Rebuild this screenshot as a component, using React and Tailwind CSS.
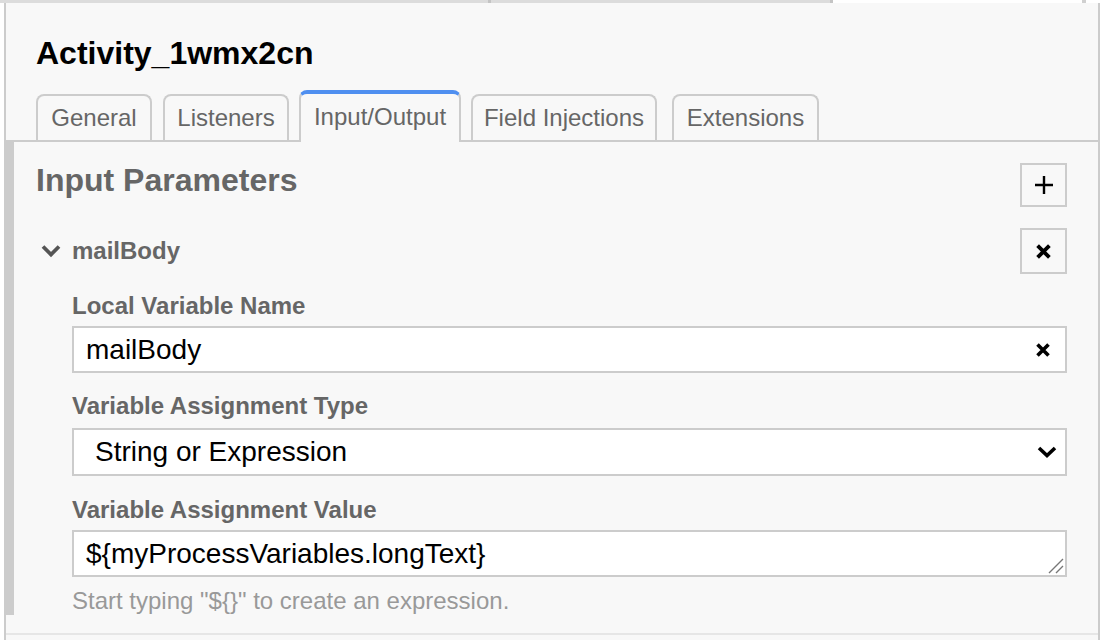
import React from "react";

const font = "font-['Liberation_Sans',Arial,Helvetica,sans-serif]";

function Tab({ label, active, className = "" }) {
  if (active) {
    return (
      <div
        className={`relative z-10 -mb-[2px] flex h-[52px] items-center justify-center rounded-t-[8px] border-x-2 border-t-4 border-x-[#ccc] border-t-[#4f8ff0] bg-[#f8f8f8] pb-[2px] text-[24px] text-[#666] ${className}`}
      >
        {label}
      </div>
    );
  }
  return (
    <div
      className={`flex h-[46px] items-center justify-center rounded-t-[8px] border-x-2 border-t-2 border-[#ccc] bg-[#f8f8f8] text-[24px] text-[#666] ${className}`}
    >
      {label}
    </div>
  );
}

function XIcon({ size = 15, stroke = 3.6 }) {
  return (
    <svg width={size} height={size} viewBox="0 0 14 14">
      <path d="M1.5 1.5 L12.5 12.5 M12.5 1.5 L1.5 12.5" stroke="#000" strokeWidth={stroke} strokeLinecap="butt" fill="none" />
    </svg>
  );
}

function Label({ children, className = "" }) {
  return (
    <div className={`text-[24px] font-bold leading-[30px] text-[#666] ${className}`}>{children}</div>
  );
}

export default function App() {
  return (
    <div className={`relative h-[640px] w-[1110px] overflow-hidden bg-white ${font}`}>
      {/* top strip */}
      <div className="flex h-[3px]">
        <div className="w-[488px] bg-[#dcdcdc]" />
        <div className="w-[3px] bg-[#c4c4c4]" />
        <div className="w-[339px] bg-[#dcdcdc]" />
        <div className="w-[3px] bg-[#c4c4c4]" />
        <div className="w-[249px] bg-white" />
        <div className="w-[4px] bg-[#d0d0d0]" />
      </div>

      {/* panel */}
      <div className="ml-[4px] flex h-[637px] w-[1096px] flex-col border-x-2 border-[#ccc] bg-[#f8f8f8]">
        <h1 className="pl-[30px] pt-[30px] text-[32px] font-bold leading-[40px] text-black">
          Activity_1wmx2cn
        </h1>

        {/* tabs */}
        <div className="mt-[17px] flex h-[52px] items-end border-b-2 border-[#ccc] pl-[30px]">
          <Tab label="General" className="w-[116px]" />
          <Tab label="Listeners" className="ml-[11px] w-[126px]" />
          <Tab label="Input/Output" active className="ml-[10px] w-[162px]" />
          <Tab label="Field Injections" className="ml-[10px] w-[186px]" />
          <Tab label="Extensions" className="ml-[15px] w-[147px]" />
        </div>

        {/* group */}
        <div className="border-b-2 border-[#e6e6e6] pb-[18px]">
          <div className="border-l-[8px] border-[#ccc] pl-[22px] pr-[31px]">
            <div className="flex items-start justify-between pt-[18px]">
              <h2 className="text-[32px] font-bold leading-[40px] text-[#666]">Input Parameters</h2>
              <div className="mt-[3px] flex h-[44px] w-[47px] items-center justify-center border-2 border-[#ccc]">
                <svg width="20" height="20" viewBox="0 0 20 20">
                  <path d="M10 1 V19 M1 10 H19" stroke="#000" strokeWidth="2.4" fill="none" />
                </svg>
              </div>
            </div>

            <div className="mt-[21px] flex items-center justify-between">
              <div className="flex items-center">
                <svg width="20" height="14" viewBox="0 0 20 14" className="ml-[5px]">
                  <path d="M2 2.5 L10 10.5 L18 2.5" stroke="#555" strokeWidth="3.8" fill="none" />
                </svg>
                <span className="ml-[11px] text-[24px] font-bold leading-[30px] text-[#666]">mailBody</span>
              </div>
              <div className="flex h-[46px] w-[47px] items-center justify-center border-2 border-[#ccc]">
                <XIcon />
              </div>
            </div>

            <div className="pl-[36px]">
              <Label className="mt-[17px]">Local Variable Name</Label>
              <div className="mt-[5px] flex h-[47px] items-center justify-between border-2 border-[#ccc] bg-white pl-[12px] pr-[15px]">
                <span className="text-[28px] leading-[32px] text-black">mailBody</span>
                <XIcon size={14} stroke={3.6} />
              </div>

              <Label className="mt-[18px]">Variable Assignment Type</Label>
              <div className="mt-[7px] flex h-[48px] items-center justify-between border-2 border-[#ccc] bg-white pl-[21px] pr-[8px]">
                <span className="text-[28px] leading-[32px] text-black">String or Expression</span>
                <svg width="20" height="14" viewBox="0 0 20 14">
                  <path d="M2 3 L10 10.5 L18 3" stroke="#000" strokeWidth="3.6" fill="none" />
                </svg>
              </div>

              <Label className="mt-[19px]">Variable Assignment Value</Label>
              <div className="relative mt-[5px] flex h-[47px] items-center border-2 border-[#ccc] bg-white pl-[12px]">
                <span className="text-[28px] leading-[32px] text-black">{"${myProcessVariables.longText}"}</span>
                <svg width="16" height="16" viewBox="0 0 16 16" className="absolute bottom-[1px] right-[1px]">
                  <path d="M1 15 L15 1 M8 15 L15 8" stroke="#777" strokeWidth="1.4" fill="none" />
                </svg>
              </div>

              <div className="mt-[10px] text-[24px] leading-[28px] text-[#999]">
                {'Start typing "${}" to create an expression.'}
              </div>
            </div>
          </div>
        </div>
      </div>
    </div>
  );
}
